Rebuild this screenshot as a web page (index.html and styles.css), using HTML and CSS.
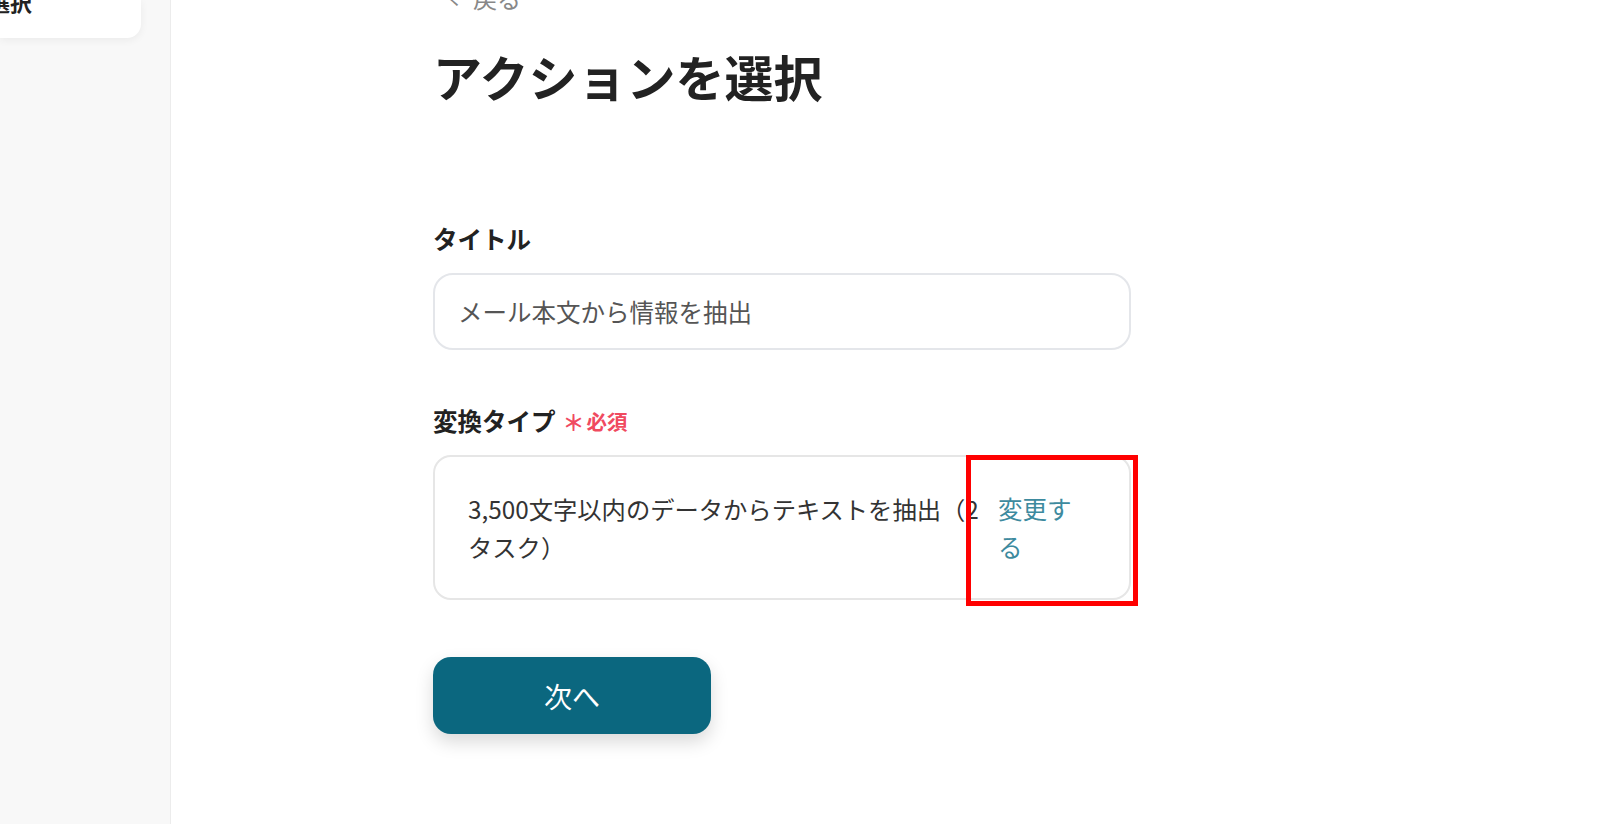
FILE: index.html
```html
<!DOCTYPE html>
<html lang="ja">
<head>
<meta charset="utf-8">
<link rel="stylesheet" href="styles.css">
</head>
<body>
<div class="page">
  <aside class="sidebar">
    <div class="side-card"><span class="side-text">選択</span></div>
  </aside>
  <main class="main">
    <div class="content">
      <div class="back"><span class="chev">く</span><span>戻る</span></div>
      <h1 class="title">アクションを選択</h1>
      <div class="field field-title">
        <div class="label">タイトル</div>
        <div class="input">メール本文から情報を抽出</div>
      </div>
      <div class="field field-type">
        <div class="label">変換タイプ<span class="req"><span class="ast">＊</span>必須</span></div>
        <div class="select-box">
          <div class="select-text">3,500文字以内のデータからテキストを抽出（2タスク）</div>
          <div class="change">変更する</div>
          <div class="highlight"></div>
        </div>
      </div>
      <button class="next">次へ</button>
    </div>
  </main>
</div>
</body>
</html>
```
FILE: styles.css
```css
* { box-sizing: border-box; }
html, body { margin: 0; padding: 0; height: 100%; overflow: hidden; }
body {
  font-family: "Noto Sans CJK JP", "Noto Sans", sans-serif;
  background: #ffffff;
  color: #222;
}
.page { display: flex; height: 824px; }
.sidebar {
  width: 171px;
  flex-shrink: 0;
  background: #f8f8f8;
  border-right: 1px solid #ececec;
}
.side-card {
  width: 141px;
  height: 38px;
  background: #fff;
  border-radius: 0 0 14px 0;
  box-shadow: 0 2px 8px rgba(0,0,0,0.06);
  overflow: hidden;
}
.side-text {
  display: block;
  margin-left: -12px;
  margin-top: -15px;
  font-size: 22px;
  font-weight: 700;
  line-height: 32px;
  color: #222;
}
.main { flex: 1; }
.content {
  width: 698px;
  margin-left: 262px;
}
.back {
  margin-top: -18px;
  margin-left: 12px;
  height: 31px;
  font-size: 24px;
  line-height: 31px;
  color: #888;
  display: flex;
  gap: 10px;
}
.chev { font-size: 18px; }
.title {
  margin: 28px 0 0 0;
  font-size: 49px;
  line-height: 70px;
  font-weight: 700;
  color: #222;
}
.field-title { margin-top: 112px; }
.label {
  font-size: 24.5px;
  font-weight: 700;
  line-height: 32px;
  color: #222;
  display: flex;
  align-items: center;
}
.req {
  color: #f04a5f;
  font-size: 20.5px;
  font-weight: 700;
  margin-left: 7px;
  display: flex;
  align-items: center;
}
.ast { font-size: 22px; margin-right: 2px; }
.input {
  margin-top: 18px;
  height: 77px;
  border: 2px solid #e4e6ea;
  border-radius: 20px;
  padding: 0 23px;
  display: flex;
  align-items: center;
  font-size: 24.5px;
  color: #555;
}
.field-type { margin-top: 55px; }
.select-box {
  position: relative;
  margin-top: 18px;
  height: 145px;
  border: 2px solid #e6e6e6;
  border-radius: 18px;
  padding: 0 49px 0 33px;
  display: flex;
  align-items: center;
  gap: 3px;
}
.select-text {
  flex: 1;
  font-size: 24.3px;
  line-height: 38px;
  color: #333;
}
.change {
  width: 82px;
  font-size: 24.5px;
  line-height: 38px;
  color: #3d8a9e;
}
.highlight {
  position: absolute;
  left: 531px;
  top: -2px;
  width: 172px;
  height: 151px;
  border: 5px solid #ff0000;
}
.next {
  margin-top: 57px;
  width: 278px;
  height: 77px;
  border: none;
  border-radius: 18px;
  background: #0b677f;
  color: #fff;
  font-family: "Noto Sans CJK JP", sans-serif;
  font-size: 28px;
  box-shadow: 0 8px 18px rgba(0,0,0,0.15);
}
```
